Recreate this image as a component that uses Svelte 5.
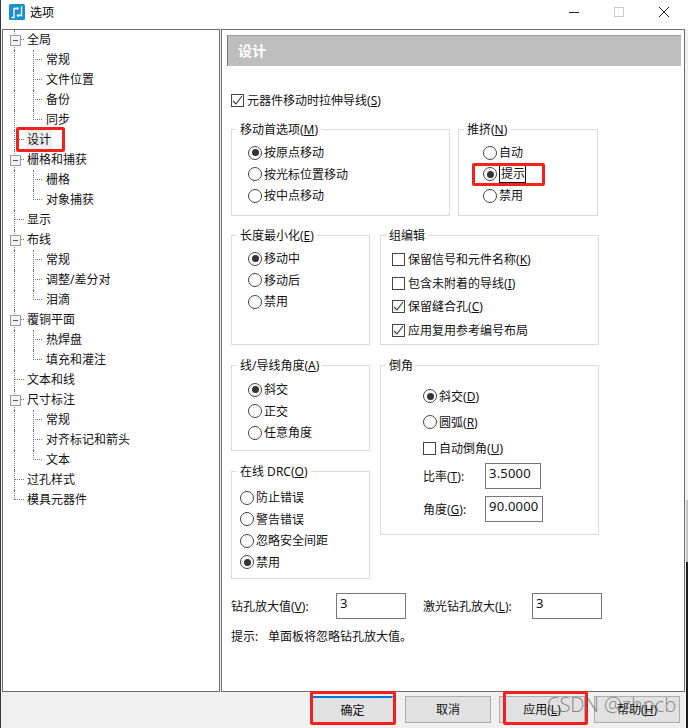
<script>
  const tree = [
    { label: '全局', open: true },
    { label: '常规', child: true },
    { label: '文件位置', child: true },
    { label: '备份', child: true },
    { label: '同步', child: true, last: true },
    { label: '设计', selected: true },
    { label: '栅格和捕获', open: true },
    { label: '栅格', child: true },
    { label: '对象捕获', child: true, last: true },
    { label: '显示' },
    { label: '布线', open: true },
    { label: '常规', child: true },
    { label: '调整/差分对', child: true },
    { label: '泪滴', child: true, last: true },
    { label: '覆铜平面', open: true },
    { label: '热焊盘', child: true },
    { label: '填充和灌注', child: true, last: true },
    { label: '文本和线' },
    { label: '尺寸标注', open: true },
    { label: '常规', child: true },
    { label: '对齐标记和箭头', child: true },
    { label: '文本', child: true, last: true },
    { label: '过孔样式' },
    { label: '模具元器件', end: true }
  ];
</script>

{#snippet radio(on, text, key)}
  <div class="opt">
    <span class="radio" class:on></span>
    <span>{text}{#if key}(<u>{key}</u>){/if}</span>
  </div>
{/snippet}

{#snippet check(on, text, key)}
  <div class="opt">
    <span class="box">
      {#if on}
        <svg width="11" height="11" viewBox="0 0 11 11"><path d="M1 6l3 3 6-8" fill="none" stroke="#333" stroke-width="1.1" /></svg>
      {/if}
    </span>
    <span>{text}{#if key}(<u>{key}</u>){/if}</span>
  </div>
{/snippet}

<div class="window">
  <header class="title">
    <svg class="logo" width="16" height="16" viewBox="0 0 16 16">
      <rect width="16" height="16" rx="1.5" fill="#1a8fd0" />
      <path d="M2.5 13.5h2.5v-9h2.5M9 11.5h3.5v-9" fill="none" stroke="#fff" stroke-width="1.3" />
      <circle cx="8.5" cy="4.5" r="1.2" fill="#fff" />
      <circle cx="9" cy="11.5" r="1.2" fill="#fff" />
    </svg>
    <span class="caption">选项</span>
    <div class="controls">
      <svg width="12" height="12" viewBox="0 0 12 12"><path d="M1 6.5h10" stroke="#222" stroke-width="1" /></svg>
      <svg width="12" height="12" viewBox="0 0 12 12"><rect x="1.5" y="1.5" width="9" height="9" fill="none" stroke="#ccc" /></svg>
      <svg width="12" height="12" viewBox="0 0 12 12"><path d="M1 1l10 10M11 1L1 11" stroke="#222" stroke-width="1" /></svg>
    </div>
  </header>

  <div class="main">
    <nav class="tree">
      {#each tree as item}
        <div class="row" class:child={item.child} class:last={item.last} class:end={item.end}>
          <i class="rail"></i>
          {#if item.child}<i class="subrail"></i>{/if}
          <i class="tick"></i>
          {#if item.open}<i class="toggle"></i>{/if}
          <span class="text" class:selected={item.selected}>{item.label}</span>
        </div>
      {/each}
    </nav>

    <section class="panel">
      <div class="heading">设计</div>
      <div class="body">
        <div class="stretch">
          {@render check(true, '元器件移动时拉伸导线', 'S')}
        </div>

        <div class="top">
          <div class="group move">
            <span class="legend">移动首选项(<u>M</u>)</span>
            {@render radio(true, '按原点移动')}
            {@render radio(false, '按光标位置移动')}
            {@render radio(false, '按中点移动')}
          </div>
          <div class="group push">
            <span class="legend">推挤(<u>N</u>)</span>
            {@render radio(false, '自动')}
            <div class="opt">
              <span class="radio on"></span>
              <span class="focus">提示</span>
            </div>
            {@render radio(false, '禁用')}
          </div>
        </div>

        <div class="columns">
          <div class="col narrow">
            <div class="group len">
              <span class="legend">长度最小化(<u>E</u>)</span>
              {@render radio(true, '移动中')}
              {@render radio(false, '移动后')}
              {@render radio(false, '禁用')}
            </div>
            <div class="group angle">
              <span class="legend">线/导线角度(<u>A</u>)</span>
              {@render radio(true, '斜交')}
              {@render radio(false, '正交')}
              {@render radio(false, '任意角度')}
            </div>
            <div class="group drc">
              <span class="legend">在线 DRC(<u>O</u>)</span>
              {@render radio(false, '防止错误')}
              {@render radio(false, '警告错误')}
              {@render radio(false, '忽略安全间距')}
              {@render radio(true, '禁用')}
            </div>
          </div>

          <div class="col wide">
            <div class="group edit">
              <span class="legend">组编辑</span>
              {@render check(false, '保留信号和元件名称', 'K')}
              {@render check(false, '包含未附着的导线', 'I')}
              {@render check(true, '保留缝合孔', 'C')}
              {@render check(true, '应用复用参考编号布局')}
            </div>
            <div class="group bevel">
              <span class="legend">倒角</span>
              <div class="bevel-opts">
                {@render radio(true, '斜交', 'D')}
                {@render radio(false, '圆弧', 'R')}
                {@render check(false, '自动倒角', 'U')}
              </div>
              <div class="field ratio">
                <span class="field-label">比率(<u>T</u>):</span>
                <span class="input short">3.5000</span>
              </div>
              <div class="field">
                <span class="field-label">角度(<u>G</u>):</span>
                <span class="input">90.0000</span>
              </div>
            </div>
          </div>
        </div>

        <div class="drill">
          <span class="drill-label">钻孔放大值(<u>V</u>):</span>
          <span class="input big">3</span>
          <span class="laser-label">激光钻孔放大(<u>L</u>):</span>
          <span class="input big">3</span>
        </div>
        <p class="hint"><span class="hint-key">提示:</span>单面板将忽略钻孔放大值。</p>
      </div>
    </section>
  </div>

  <footer class="footer">
    <button class="btn primary">确定</button>
    <button class="btn">取消</button>
    <button class="btn apply">应用(<u>L</u>)</button>
    <button class="btn">帮助(<u>H</u>)</button>
  </footer>

  <!-- annotations drawn over the dialog -->
  <i class="mark m-tree"></i>
  <i class="mark m-push"></i>
  <i class="mark m-ok"></i>
  <i class="mark m-apply"></i>
  <i class="edge"></i>
  <span class="watermark">CSDN @zhpcb</span>
</div>

<style>
  :global(body) {
    margin: 0;
    background: #f0f0f0;
  }

  .window {
    position: relative;
    width: 688px;
    height: 728px;
    box-sizing: border-box;
    border-left: 1px solid #3a3a3a;
    background: #f0f0f0;
    color: #111;
    font: 12px/17px "Noto Sans", "Noto Sans CJK SC", sans-serif;
    display: flex;
    flex-direction: column;
    overflow: hidden;
  }

  .title {
    height: 29px;
    flex: none;
    background: #fff;
    display: flex;
    align-items: center;
    box-sizing: border-box;
    padding: 0 0 5px 8px;
  }

  .logo {
    margin-right: 5px;
  }

  .caption {
    font-size: 12px;
    color: #000;
  }

  .controls {
    margin-left: auto;
    display: flex;
    gap: 33px;
    padding-right: 18px;
  }

  .main {
    height: 663px;
    flex: none;
    display: flex;
    gap: 1px;
    padding-left: 1px;
  }

  .tree {
    width: 218px;
    box-sizing: border-box;
    background: #fff;
    border: 1px solid #6e6e6e;
  }

  .row {
    position: relative;
    height: 20px;
    line-height: 19px;
    padding-left: 23px;
  }

  .row.child {
    padding-left: 42px;
  }

  .rail {
    position: absolute;
    left: 11px;
    top: 0;
    bottom: 0;
    border-left: 1px dotted #777;
  }

  .row.end .rail {
    bottom: 10px;
  }

  .subrail {
    position: absolute;
    left: 30px;
    top: 0;
    bottom: 0;
    border-left: 1px dotted #777;
  }

  .row.last .subrail {
    bottom: 10px;
  }

  .tick {
    position: absolute;
    left: 11px;
    top: 9px;
    width: 10px;
    border-top: 1px dotted #777;
  }

  .row.child .tick {
    left: 30px;
    width: 9px;
  }

  .toggle {
    position: absolute;
    left: 7px;
    top: 5px;
    width: 9px;
    height: 9px;
    border: 1px solid #9a9a9a;
    background: linear-gradient(#3b5a9e, #3b5a9e) center / 5px 1px no-repeat, #f4f4f4;
  }

  .text {
    position: relative;
    display: inline-block;
    padding: 0 1px;
    height: 19px;
  }

  .selected {
    background: #eee;
  }

  .panel {
    width: 464px;
    box-sizing: border-box;
    background: #fff;
    border: 1px solid #6e6e6e;
    padding: 5px 3px 0 5px;
  }

  .heading {
    height: 31px;
    background: #bebebe;
    border-left: 1px solid #777;
    border-top: 1px solid #999;
    box-sizing: border-box;
    color: #fff;
    font-size: 14px;
    font-weight: 700;
    line-height: 30px;
    padding-left: 10px;
  }

  .body {
    padding: 24px 0 0 4px;
  }

  .opt {
    display: flex;
    align-items: center;
    height: 21.5px;
    gap: 2px;
  }

  .radio {
    width: 12px;
    height: 12px;
    border: 1px solid #444;
    border-radius: 50%;
    box-sizing: content-box;
    flex: none;
    position: relative;
  }

  .radio.on::after {
    content: "";
    position: absolute;
    left: 2.5px;
    top: 2.5px;
    width: 7px;
    height: 7px;
    border-radius: 50%;
    background: #333;
  }

  .box {
    width: 11px;
    height: 11px;
    border: 1px solid #444;
    flex: none;
    margin-right: 1px;
    display: flex;
  }

  .stretch .opt {
    height: 20px;
  }

  .focus {
    outline: 1px solid #111;
    padding: 0 0 0 1px;
    width: 24px;
    height: 16px;
    line-height: 15px;
    margin-left: 1px;
  }

  .top {
    display: flex;
    gap: 8px;
    margin-top: 19px;
  }

  .group {
    position: relative;
    box-sizing: border-box;
    border: 1px solid #dcdcdc;
    padding-top: 12px;
  }

  .legend {
    position: absolute;
    left: 5px;
    top: -9px;
    background: #fff;
    padding: 0 3px;
  }

  .move {
    width: 219px;
    height: 87px;
    padding-left: 16px;
  }

  .push {
    width: 140px;
    height: 87px;
    padding-left: 24px;
  }

  .columns {
    display: flex;
    gap: 10px;
    margin-top: 19px;
  }

  .col {
    display: flex;
    flex-direction: column;
  }

  .narrow {
    width: 139px;
    gap: 20px;
  }

  .wide {
    width: 219px;
    gap: 20px;
  }

  .len {
    height: 110px;
    padding-left: 16px;
  }

  .angle {
    height: 86px;
    padding: 13px 0 0 16px;
  }

  .drc {
    height: 108px;
    padding: 15px 0 0 8px;
  }

  .edit {
    height: 110px;
    padding: 12px 0 0 11px;
  }

  .edit .opt {
    height: 23.5px;
  }

  .bevel {
    height: 170px;
    padding: 17px 0 0 42px;
  }

  .bevel-opts .opt {
    height: 26px;
  }

  .field {
    display: flex;
    align-items: center;
    margin-top: 7px;
  }

  .field-label {
    width: 62px;
  }

  .ratio {
    margin-top: 2px;
  }

  .input {
    box-sizing: border-box;
    display: block;
    height: 26px;
    width: 58px;
    border: 1px solid #777;
    padding: 1px 0 0 3px;
    font-size: 13px;
    letter-spacing: 0.2px;
  }

  .input.short {
    width: 56px;
  }

  .input.big {
    width: 70px;
  }

  .drill {
    display: flex;
    align-items: center;
    margin-top: 14px;
  }

  .drill-label {
    width: 105px;
  }

  .laser-label {
    margin-left: 17px;
    width: 109px;
  }

  .hint {
    margin: 9px 0 0;
  }

  .hint-key {
    display: inline-block;
    width: 37px;
  }

  .footer {
    flex: 1;
    display: flex;
    justify-content: flex-end;
    align-items: flex-start;
    gap: 8px;
    padding: 4px 8px 0 0;
  }

  .btn {
    width: 86px;
    height: 27px;
    background: #e1e1e1;
    border: 1px solid #adadad;
    font: inherit;
    color: #111;
    padding: 0;
  }

  .apply {
    margin-right: 1px;
  }

  .primary {
    border: 1px solid #e1e1e1;
    border-top: 2px solid #0078d7;
    width: 81px;
    margin-right: 4px;
  }

  .mark {
    position: absolute;
    box-sizing: border-box;
    border: 3px solid #f3211b;
    border-radius: 2px;
  }

  .m-tree {
    left: 15px;
    top: 127px;
    width: 49px;
    height: 25px;
  }

  .m-push {
    left: 471px;
    top: 163px;
    width: 73px;
    height: 23px;
  }

  .m-ok {
    left: 309px;
    top: 691px;
    width: 86px;
    height: 34px;
  }

  .m-apply {
    left: 502px;
    top: 691px;
    width: 85px;
    height: 34px;
  }

  .edge {
    position: absolute;
    right: 0;
    top: 500px;
    bottom: 0;
    width: 2px;
    background: linear-gradient(#c4c4c4 62px, #1c1c1c 62px);
  }

  .watermark {
    position: absolute;
    left: 546px;
    top: 692px;
    font: 300 20px/26px "Open Sans", "Noto Sans", sans-serif;
    color: rgba(80, 80, 80, 0.65);
    white-space: nowrap;
  }
</style>
